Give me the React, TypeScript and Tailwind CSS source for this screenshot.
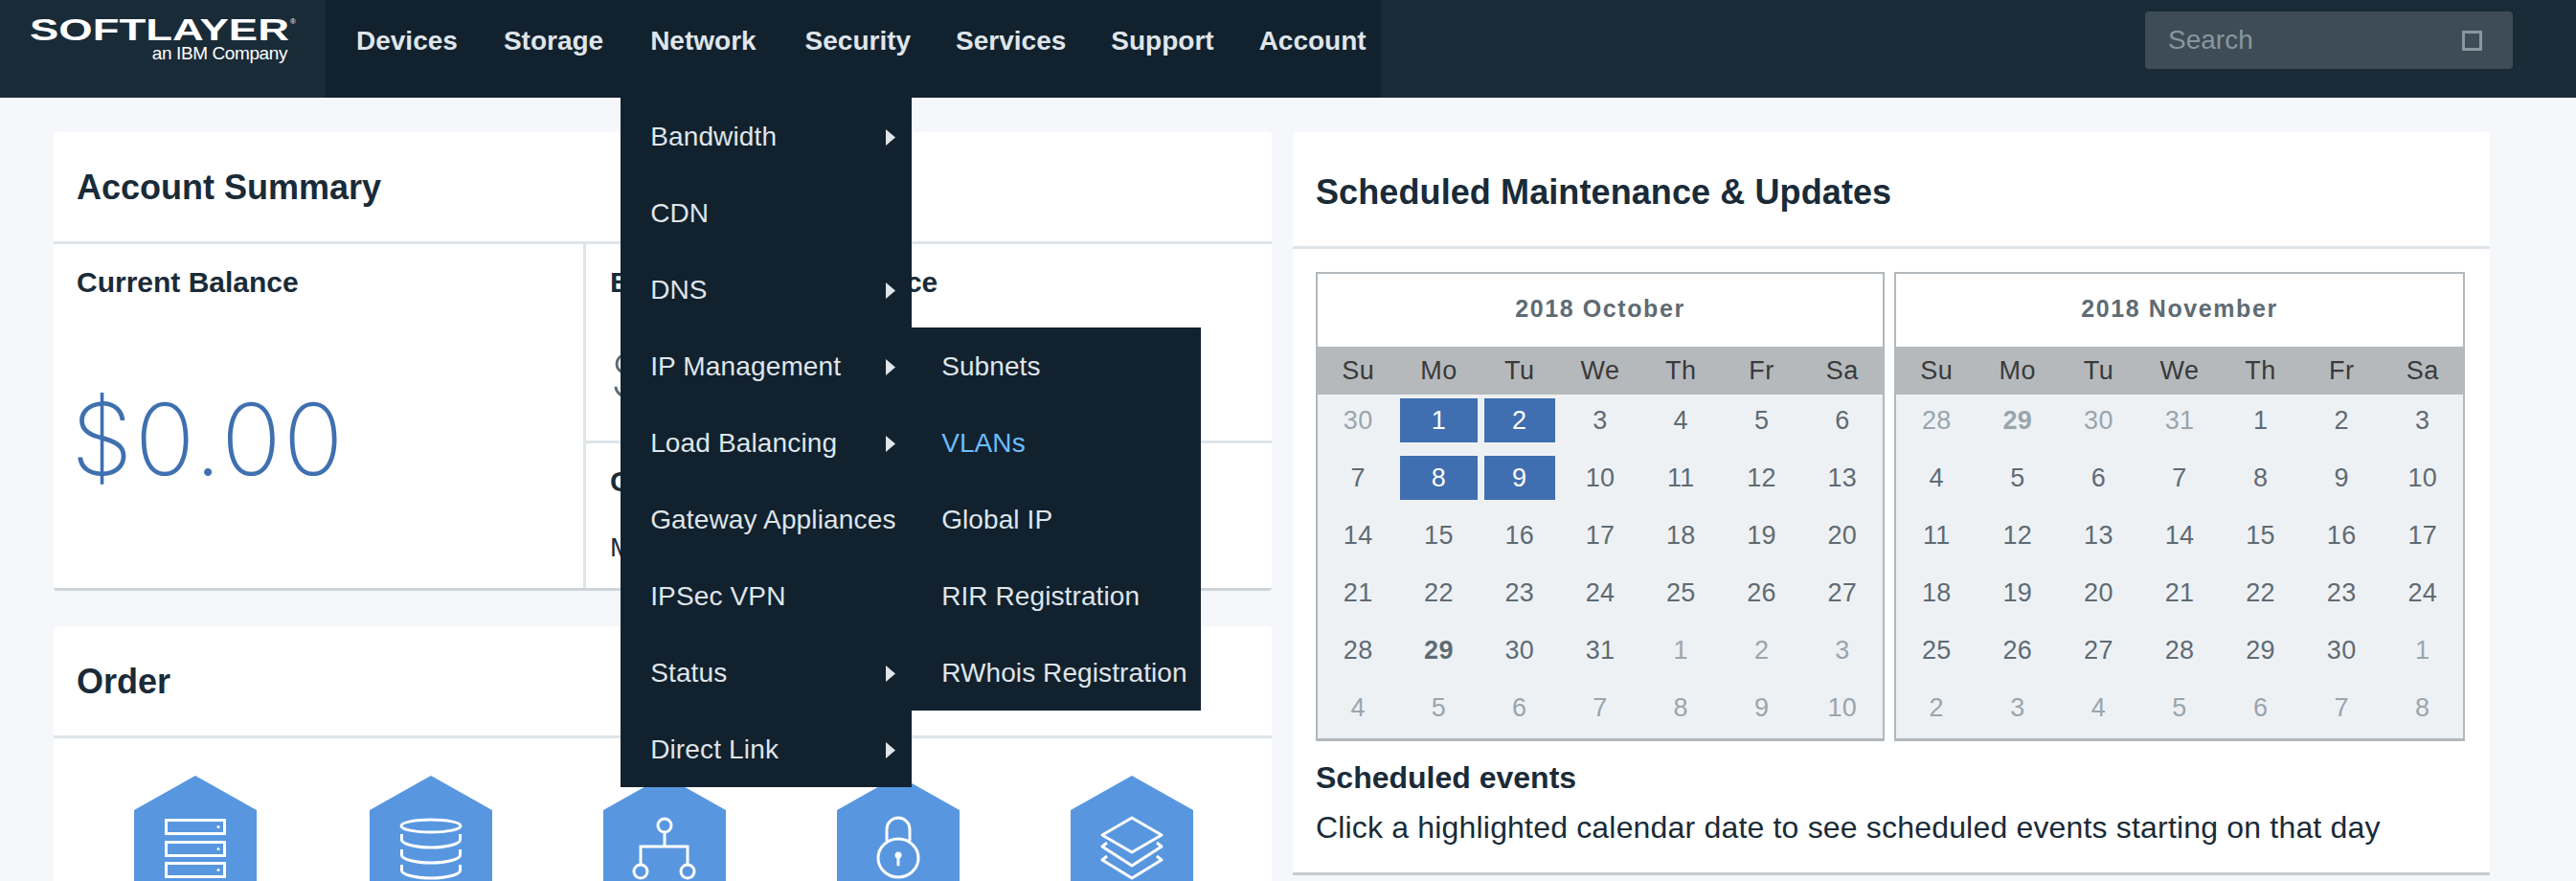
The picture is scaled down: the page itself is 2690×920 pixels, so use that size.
import React from 'react';

const navItems = [
  { label: 'Devices', pad: 'pr-6' },
  { label: 'Storage', pad: 'pr-[25px]' },
  { label: 'Network', pad: 'pr-[27px]' },
  { label: 'Security', pad: 'pr-[23px]' },
  { label: 'Services', pad: 'pr-[23px]' },
  { label: 'Support', pad: 'pr-[23px]' },
  { label: 'Account', pad: 'pr-6' },
];

const networkMenu = [
  { label: 'Bandwidth', arrow: true },
  { label: 'CDN' },
  { label: 'DNS', arrow: true },
  { label: 'IP Management', arrow: true },
  { label: 'Load Balancing', arrow: true },
  { label: 'Gateway Appliances' },
  { label: 'IPSec VPN' },
  { label: 'Status', arrow: true },
  { label: 'Direct Link', arrow: true },
];

const ipMenu = ['Subnets', 'VLANs', 'Global IP', 'RIR Registration', 'RWhois Registration'];

const weekdays = ['Su', 'Mo', 'Tu', 'We', 'Th', 'Fr', 'Sa'];

const range = (from: number, to: number) => {
  const out: number[] = [];
  for (let i = from; i <= to; i++) out.push(i);
  return out;
};

type Day = { d: number; muted?: boolean; bold?: boolean; sel?: boolean };

const plain = (n: number[]): Day[] => n.map((d) => ({ d }));
const muted = (n: number[]): Day[] => n.map((d) => ({ d, muted: true }));

const october: Day[] = [
  { d: 30, muted: true },
  { d: 1, sel: true },
  { d: 2, sel: true },
  ...plain(range(3, 7)),
  { d: 8, sel: true },
  { d: 9, sel: true },
  ...plain(range(10, 28)),
  { d: 29, bold: true },
  ...plain([30, 31]),
  ...muted(range(1, 10)),
];

const november: Day[] = [
  { d: 28, muted: true },
  { d: 29, muted: true, bold: true },
  { d: 30, muted: true },
  { d: 31, muted: true },
  ...plain(range(1, 30)),
  ...muted(range(1, 8)),
];

const Calendar = ({ title, days, width }: { title: string; days: Day[]; width: string }) => (
  <div className={`${width} border-x-2 border-t-2 border-b-[3px] border-[#b2b8bc] bg-[#eef1f4]`}>
    <div className="h-[76px] pb-[2px] bg-white flex items-center justify-center text-[25px] font-bold tracking-[1.6px] text-[#5f6b73]">
      {title}
    </div>
    <div className="h-[50px] bg-[#b5b9bc] grid grid-cols-7 items-center text-center text-[27px] tracking-[0.5px] text-[#3a3a3a]">
      {weekdays.map((w) => (
        <div key={w}>{w}</div>
      ))}
    </div>
    <div className="grid grid-cols-7 gap-y-[14px] pt-[4px] pb-[9px] text-center text-[27px] tracking-[0.3px]">
      {days.map((day, i) => {
        let tone = 'text-[#5f6b73]';
        if (day.muted) tone = 'text-[#9aa5ac]';
        if (day.sel) tone = i % 7 === 1 ? 'mx-[2px] bg-[#3f6fb0] text-white' : 'mx-[5px] bg-[#3f6fb0] text-white';
        return (
          <div key={i} className={`h-[46px] flex items-center justify-center ${tone} ${day.bold ? 'font-bold' : ''}`}>
            {day.d}
          </div>
        );
      })}
    </div>
  </div>
);

const Hex = ({ children, className }: { children: React.ReactNode; className: string }) => (
  <svg width="128" height="150" viewBox="0 0 128 150" className={`shrink-0 ${className}`}>
    <polygon points="64,0 128,36 128,150 0,150 0,36" fill="#5897e0" />
    <g fill="none" stroke="#fff" strokeWidth="3">
      {children}
    </g>
  </svg>
);

const Arrow = () => (
  <svg width="10" height="17" viewBox="0 0 10 17" className="absolute right-[17px] top-[33px]">
    <polygon points="0,0 10,8.5 0,17" fill="#dfe5ea" />
  </svg>
);

export default function App() {
  return (
    <div className="relative h-[920px] overflow-hidden bg-[#f5f7fa] font-['Liberation_Sans',Arial,sans-serif] text-[#1a2b38]">
      <header className="h-[102px] bg-[#1a2b38] flex">
        <div className="w-[340px] relative text-white">
          <div className="absolute left-[31px] top-[13px] origin-left scale-x-[1.42] text-[32px] leading-[36px] font-bold whitespace-nowrap">
            SOFTLAYER
          </div>
          <span className="absolute left-[303px] top-[18px] text-[8px] leading-[10px]">®</span>
          <div className="absolute right-[40px] top-[44px] text-[19px] leading-[24px] tracking-[-0.4px] whitespace-nowrap">
            an IBM Company
          </div>
        </div>
        <nav className="w-[1102px] bg-[#12212e] flex pl-2">
          {navItems.map((item) => (
            <div key={item.label} className={`relative pl-6 ${item.pad} h-full pt-[27px] text-[28px] leading-[32px] font-bold text-[#dfe5ea]`}>
              {item.label}
              {item.label === 'Network' && (
                <div className="absolute z-10 -left-[7px] top-full w-[304px] bg-[#12212e] font-normal tracking-[0.15px]">
                  {networkMenu.map((m) => (
                    <div key={m.label} className="relative h-[80px] pl-[31px] pt-[2px] flex items-center whitespace-nowrap">
                      {m.label}
                      {m.arrow && <Arrow />}
                      {m.label === 'IP Management' && (
                        <div className="absolute left-full top-0 w-[302px] bg-[#12212e] tracking-[0.1px]">
                          {ipMenu.map((s) => (
                            <div
                              key={s}
                              className={`h-[80px] pl-[31px] pt-[2px] flex items-center ${s === 'VLANs' ? 'text-[#6dbcf9]' : ''}`}
                            >
                              {s}
                            </div>
                          ))}
                        </div>
                      )}
                    </div>
                  ))}
                </div>
              )}
            </div>
          ))}
        </nav>
        <div className="ml-auto mr-[66px] mt-[12px] w-[384px] h-[60px] rounded-[4px] bg-[#3d4c56] flex items-center justify-between pl-[24px] pr-[32px] text-[28px] text-[#8a969e]">
          <span>Search</span>
          <div className="w-[21px] h-[21px] border-[3px] border-[#8a969e]" />
        </div>
      </header>

      <main className="flex gap-[22px] pl-[56px] pt-[36px]">
        <div className="w-[1272px] shrink-0">
          <section className="bg-white rounded-[4px] border-b-[3px] border-[#cdd3d8]">
            <div className="h-[117px] pl-[24px] pt-[37px] text-[36px] leading-[42px] font-bold border-b-[3px] border-[#dfe4e8]">
              Account Summary
            </div>
            <div className="h-[359px] flex">
              <div className="w-[556px] border-r-[3px] border-[#dfe4e8] pl-[24px] pt-[23px]">
                <div className="text-[30px] leading-[34px] font-bold">Current Balance</div>
                <div className="mt-[81px] -ml-[6px] text-[104px] leading-[130px] font-['Inter'] font-extralight tracking-[2px] text-[#3f70b0]">
                  $0.00
                </div>
              </div>
              <div className="flex-1 flex flex-col">
                <div className="h-[208px] border-b-[3px] border-[#dfe4e8] pl-[25px] pt-[23px]">
                  <div className="text-[30px] leading-[34px] font-bold whitespace-nowrap">Billing Account Balance</div>
                  <div className="mt-[40px] text-[64px] leading-[80px] font-['Inter'] font-extralight text-[#5c6b75]">$0.00</div>
                </div>
                <div className="pl-[25px] pt-[23px]">
                  <div className="text-[30px] leading-[34px] font-bold">Current</div>
                  <div className="mt-[36px] text-[28px] leading-[32px]">Monthly</div>
                </div>
              </div>
            </div>
          </section>

          <section className="mt-[37px] bg-white rounded-t-[4px] h-[400px]">
            <div className="h-[117px] pl-[24px] pt-[37px] text-[36px] leading-[42px] font-bold border-b-[3px] border-[#dfe4e8]">
              Order
            </div>
            <div className="flex pl-[84px] pt-[39px]">
              <Hex className="mr-[118px]">
                <rect x="33.5" y="46.5" width="61" height="14" />
                <rect x="33.5" y="69.5" width="61" height="14" />
                <rect x="33.5" y="91.5" width="61" height="14" />
                <circle cx="88" cy="53.5" r="1.5" fill="#fff" stroke="none" />
                <circle cx="88" cy="76.5" r="1.5" fill="#fff" stroke="none" />
                <circle cx="88" cy="98.5" r="1.5" fill="#fff" stroke="none" />
              </Hex>
              <Hex className="mr-[116px]">
                <ellipse cx="64" cy="52.5" rx="31" ry="6.5" />
                <path d="M33.5 61v6c0 4 13 8 30.5 8s30.5-4 30.5-8v-6" />
                <path d="M33.5 77v6c0 4 13 8 30.5 8s30.5-4 30.5-8v-6" />
                <path d="M33.5 93v6c0 4 13 8 30.5 8s30.5-4 30.5-8v-6" />
              </Hex>
              <Hex className="mr-[116px]">
                <circle cx="64" cy="52" r="7" />
                <path d="M64 59v15M39 93V74h49v19" />
                <circle cx="39" cy="100" r="7" />
                <circle cx="88" cy="100" r="7" />
              </Hex>
              <Hex className="mr-[116px]">
                <ellipse cx="64" cy="86" rx="21" ry="20" />
                <path d="M52 68V56a12 12 0 0 1 24 0v12" />
                <circle cx="64" cy="83" r="3.5" fill="#fff" stroke="none" />
                <path d="M64 84v9" strokeLinecap="round" />
              </Hex>
              <Hex className="">
                <path d="M64 44L95 62 64 80 33 62Z" strokeLinejoin="round" />
                <path d="M38 70l-5 4 31 20 31-20-5-4" strokeLinejoin="round" />
                <path d="M38 84l-5 4 31 19 31-19-5-4" strokeLinejoin="round" />
              </Hex>
            </div>
          </section>
        </div>

        <section className="w-[1250px] shrink-0 h-[776px] bg-white border-b-[3px] border-[#c6cbd0]">
          <div className="h-[122px] pl-[24px] pt-[42px] text-[36px] leading-[42px] font-bold tracking-[0.1px] border-b-[3px] border-[#dfe4e8]">
            Scheduled Maintenance &amp; Updates
          </div>
          <div className="flex gap-[10px] pl-[24px] pt-[24px]">
            <Calendar title="2018 October" days={october} width="w-[594px]" />
            <Calendar title="2018 November" days={november} width="w-[596px]" />
          </div>
          <div className="pl-[24px] mt-[20px] text-[32px] leading-[36px] font-bold">Scheduled events</div>
          <div className="pl-[24px] mt-[16px] text-[32px] leading-[36px] tracking-[0.18px]">
            Click a highlighted calendar date to see scheduled events starting on that day
          </div>
        </section>
      </main>
    </div>
  );
}
